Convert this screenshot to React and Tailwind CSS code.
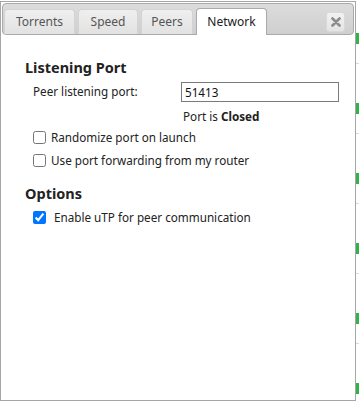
import React from "react";

const font = { fontFamily: '"Noto Sans", "Open Sans", Arial, sans-serif' };

const Tab = ({ label, width, active = false }) => {
  if (active) {
    return (
      <div className={`${width} h-[27px] -mb-px flex items-center justify-center rounded-t-[4px] border border-b-0 border-[#aaaaaa] bg-white text-[12px] text-[#212121]`}>
        {label}
      </div>
    );
  }
  return (
    <div className={`${width} h-[25px] flex items-center justify-center rounded-t-[4px] border border-b-0 border-[#d3d3d3] bg-gradient-to-b from-[#efefef] to-[#e2e2e2] text-[12px] text-[#555555]`}>
      {label}
    </div>
  );
};

const CloseButton = () => (
  <div className="w-[19px] h-[20px] mb-[2px] flex items-center justify-center rounded-[3px] border border-[#d9d9d9] bg-gradient-to-b from-[#f2f2f2] to-[#e4e4e4]">
    <svg width="10" height="10" viewBox="0 0 10 10">
      <path d="M1.5 1.5 L8.5 8.5 M8.5 1.5 L1.5 8.5" stroke="#8c8c8c" strokeWidth="2.6" strokeLinecap="round" />
    </svg>
  </div>
);

const Checkbox = ({ label, checked = false }) => (
  <label className="flex items-center h-[23px] text-[11.7px] text-[#222222]">
    <input type="checkbox" defaultChecked={checked} className={`w-[13px] h-[13px] m-0 ${checked ? "mr-[8px]" : "mr-[5px]"}`} />
    {label}
  </label>
);

const BackgroundStrip = () => {
  const rows = [0, 1, 2, 3, 4, 5];
  return (
    <div className="w-[3px] pt-[33px] flex flex-col">
      {rows.map((r) => (
        <div key={r} className="h-[70px] shrink-0 flex flex-col">
          <div className="h-[11px] shrink-0 bg-[#34b24a]" />
          <div className="h-[19px] shrink-0" />
          <div className="h-px shrink-0 bg-[#d9d9d9]" />
        </div>
      ))}
    </div>
  );
};

export default function App() {
  return (
    <div className="w-[359px] h-[402px] flex bg-white overflow-hidden" style={font}>
      <div className="w-[356px] h-[400px] shrink-0 mt-px border border-[#a6a6a6] bg-white p-[1px] flex flex-col">
        {/* tab header */}
        <div className="h-[32px] flex items-end justify-between rounded-[4px] border border-[#aaaaaa] bg-gradient-to-b from-[#dcdcdc] to-[#cfcfcf] pl-[1px] pr-[8px]">
          <div className="flex items-end gap-[3px]">
            <Tab label="Torrents" width="w-[71px]" />
            <Tab label="Speed" width="w-[60px]" />
            <Tab label="Peers" width="w-[52px]" />
            <Tab label="Network" width="w-[71px]" active />
          </div>
          <CloseButton />
        </div>

        {/* network panel */}
        <div className="flex flex-col pl-[23px] pt-[24px] pr-[15px] text-[#222222]">
          <div className="text-[14.5px] font-bold leading-[16px]">Listening Port</div>

          <div className="pl-[8px] mt-[6px] flex flex-col">
            <div className="flex items-center h-[21px]">
              <span className="w-[149px] text-[11.7px]">Peer listening port:</span>
              <input
                type="text"
                defaultValue="51413"
                className="w-[158px] h-[20px] border border-[#7a7a7a] px-[3px] text-[11.7px] text-[#111111] outline-none"
              />
            </div>
            <div className="h-[24px] pt-[6px] flex items-center pl-[150px] text-[11.7px]">
              Port is&nbsp;<span className="font-bold">Closed</span>
            </div>
            <Checkbox label="Randomize port on launch" />
            <Checkbox label="Use port forwarding from my router" />
          </div>

          <div className="text-[14.5px] font-bold leading-[16px] mt-[13px]">Options</div>
          <div className="pl-[8px] mt-[5px]">
            <Checkbox label="Enable uTP for peer communication" checked />
          </div>
        </div>
      </div>
      <BackgroundStrip />
    </div>
  );
}
